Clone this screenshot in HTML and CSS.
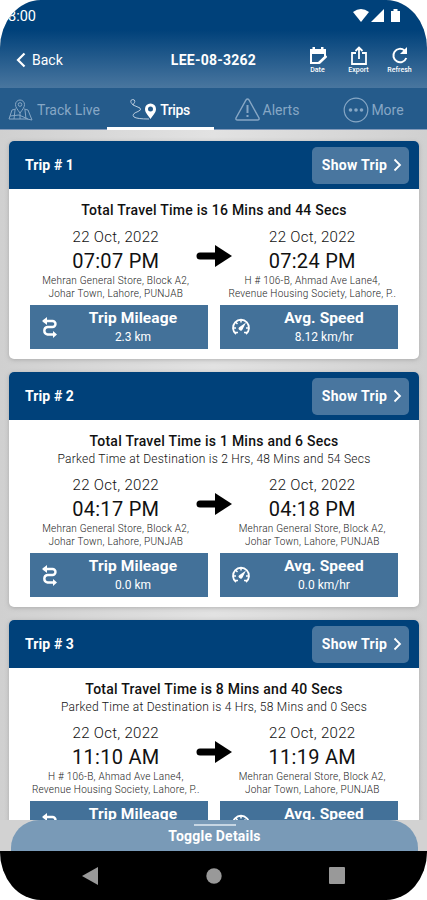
FILE: index.html
```html
<!DOCTYPE html>
<html lang="en">
<head>
<meta charset="utf-8">
<title>Trips</title>
<link rel="stylesheet" href="styles.css">
</head>
<body>
<svg class="defs" aria-hidden="true">
  <symbol id="arrow" viewBox="0 0 36 24"><path d="M4 12H22" stroke="#000" stroke-width="7" stroke-linecap="round"/><path d="M19 1V23L36 12Z"/></symbol>
  <symbol id="route" viewBox="0 0 18 22"><path d="M2.500 5H11.500a3 3 0 0 1 0 6H6.500a3.800 3.800 0 0 0 0 7.500H13" fill="none" stroke="#fff" stroke-width="2.400"/><path d="M6 1V9L1 5ZM12 15V22L16 18.500Z" fill="#fff"/></symbol>
  <symbol id="gauge" viewBox="0 0 20 18"><path d="M5 16A8 8 0 1 1 15 16" fill="none" stroke="#fff" stroke-width="1.800"/><path d="M2 10H5M4.500 4L6.500 6M10 1.500V4.500M18 10H15M4 14.500H7M13 14.500H16" stroke="#fff" stroke-width="1.500"/><path d="M8.500 9L15 4.500L11.500 11.500A2 2 0 1 1 8.500 9Z" fill="#fff"/></symbol>
  <symbol id="chev" viewBox="0 0 9 14"><path d="M1.500 1.500L7 7L1.500 12.500" fill="none" stroke="#fff" stroke-width="1.800"/></symbol>
</svg>
<div class="phone">
  <header class="top">
    <div class="status"><span>8:00</span>
      <svg width="48" height="16" viewBox="0 0 48 16" fill="#fff"><path d="M0 4Q8 -2 16 4L8 14Z"/><path d="M31 1V14H18Z"/><path d="M38 3h2.500V1h4V3H47V14H38Z"/></svg>
    </div>
    <div class="bar">
      <div class="back"><svg width="10" height="16" viewBox="0 0 10 16"><path d="M8.500 1.500L2 8L8.500 14.500" fill="none" stroke="#fff" stroke-width="2.200"/></svg><span>Back</span></div>
      <h1>LEE-08-3262</h1>
      <div class="actions">
        <div class="action"><svg width="18" height="20" viewBox="0 0 18 20"><path d="M2 5H16V11L10 17H2Z" fill="none" stroke="#fff" stroke-width="2"/><path d="M1 3H17V8H1ZM3.500 1H6V4H3.500ZM12 1H14.500V4H12Z" fill="#fff"/><path d="M10 17L17.500 10" stroke="#fff" stroke-width="2.500"/></svg><span>Date</span></div>
        <div class="action"><svg width="18" height="20" viewBox="0 0 18 20"><path d="M6 7H2V18H16V7H12M9 13V2M5.500 5L9 1.500L12.500 5" fill="none" stroke="#fff" stroke-width="1.800"/></svg><span>Export</span></div>
        <div class="action"><svg width="18" height="20" viewBox="0 0 18 20"><path d="M15.300 12A6.700 6.700 0 1 1 13.500 4.500" fill="none" stroke="#fff" stroke-width="2"/><path d="M16 1V8H9Z" fill="#fff"/></svg><span>Refresh</span></div>
      </div>
    </div>
  </header>
  <nav class="tabs">
    <div class="tab live"><svg width="26" height="22" viewBox="0 0 26 22" fill="none" stroke="currentColor"><path d="M12 14C9 10 7.500 8 7.500 5.500a4.500 4.500 0 0 1 9 0C16.500 8 15 10 12 14Z"/><circle cx="12" cy="5.500" r="1.800"/><path d="M8 10L4 11L1 20H19L24 21L20 11L16 10M7 11L6 20M12 14V20M17 11L18 20M2 17L11 16L20 20"/></svg><span>Track Live</span></div>
    <div class="tab on"><svg width="27" height="21" viewBox="0 0 27 21"><path d="M3 6C1.500 4 .8 3.500 .8 2.500a2 2 0 0 1 4 0C4.800 3.500 4 4 3 6L10 9Q12 11 8 12.500Q1 15 4 18Q7 20 19 20" fill="none" stroke="#b9cbdd"/><path fill-rule="evenodd" d="M20.500 20C17 15 15 13 15 10a5.500 5.500 0 0 1 11 0C26 13 24 15 20.500 20ZM20.500 7.500a2.500 2.500 0 1 0 0 5a2.500 2.500 0 0 0 0-5Z" fill="#fff"/></svg><span>Trips</span></div>
    <div class="tab alerts"><svg width="25" height="23" viewBox="0 0 25 23" fill="none" stroke="currentColor" stroke-width="1.400"><path d="M11 2Q12.500 0 14 2L24 20Q24.500 22 22.500 22H2.500Q.5 22 1 20Z"/><path d="M12.500 7V15M12.500 17V19" stroke-width="2"/></svg><span>Alerts</span></div>
    <div class="tab more"><svg width="26" height="26" viewBox="0 0 26 26"><circle cx="13" cy="13" r="11.800" fill="none" stroke="currentColor" stroke-width="1.200"/><g fill="currentColor"><circle cx="7.500" cy="13" r="1.800"/><circle cx="13" cy="13" r="1.800"/><circle cx="18.500" cy="13" r="1.800"/></g></svg><span>More</span></div>
  </nav>
  <main class="list">
    <section class="card">
      <div class="head"><h2>Trip # 1</h2><div class="show"><span>Show Trip</span><svg width="9" height="14"><use href="#chev"/></svg></div></div>
      <div class="body">
        <p class="total">Total Travel Time is 16 Mins and 44 Secs</p>
        <div class="legs">
          <div class="leg"><p class="date">22 Oct, 2022</p><p class="time">07:07 PM</p><p class="addr">Mehran General Store, Block A2,<br>Johar Town, Lahore, PUNJAB</p></div>
          <svg class="arrow" width="36" height="24"><use href="#arrow"/></svg>
          <div class="leg"><p class="date">22 Oct, 2022</p><p class="time">07:24 PM</p><p class="addr">H # 106-B, Ahmad Ave Lane4,<br>Revenue Housing Society, Lahore, P..</p></div>
        </div>
        <div class="stats">
          <div class="stat"><svg width="18" height="22"><use href="#route"/></svg><div><b>Trip Mileage</b><span>2.3 km</span></div></div>
          <div class="stat"><svg width="20" height="18"><use href="#gauge"/></svg><div><b>Avg. Speed</b><span>8.12 km/hr</span></div></div>
        </div>
      </div>
    </section>
    <section class="card">
      <div class="head"><h2>Trip # 2</h2><div class="show"><span>Show Trip</span><svg width="9" height="14"><use href="#chev"/></svg></div></div>
      <div class="body">
        <p class="total">Total Travel Time is 1 Mins and 6 Secs</p>
        <p class="parked">Parked Time at Destination is 2 Hrs, 48 Mins and 54 Secs</p>
        <div class="legs">
          <div class="leg"><p class="date">22 Oct, 2022</p><p class="time">04:17 PM</p><p class="addr">Mehran General Store, Block A2,<br>Johar Town, Lahore, PUNJAB</p></div>
          <svg class="arrow" width="36" height="24"><use href="#arrow"/></svg>
          <div class="leg"><p class="date">22 Oct, 2022</p><p class="time">04:18 PM</p><p class="addr">Mehran General Store, Block A2,<br>Johar Town, Lahore, PUNJAB</p></div>
        </div>
        <div class="stats">
          <div class="stat"><svg width="18" height="22"><use href="#route"/></svg><div><b>Trip Mileage</b><span>0.0 km</span></div></div>
          <div class="stat"><svg width="20" height="18"><use href="#gauge"/></svg><div><b>Avg. Speed</b><span>0.0 km/hr</span></div></div>
        </div>
      </div>
    </section>
    <section class="card">
      <div class="head"><h2>Trip # 3</h2><div class="show"><span>Show Trip</span><svg width="9" height="14"><use href="#chev"/></svg></div></div>
      <div class="body">
        <p class="total">Total Travel Time is 8 Mins and 40 Secs</p>
        <p class="parked">Parked Time at Destination is 4 Hrs, 58 Mins and 0 Secs</p>
        <div class="legs">
          <div class="leg"><p class="date">22 Oct, 2022</p><p class="time">11:10 AM</p><p class="addr">H # 106-B, Ahmad Ave Lane4,<br>Revenue Housing Society, Lahore, P..</p></div>
          <svg class="arrow" width="36" height="24"><use href="#arrow"/></svg>
          <div class="leg"><p class="date">22 Oct, 2022</p><p class="time">11:19 AM</p><p class="addr">Mehran General Store, Block A2,<br>Johar Town, Lahore, PUNJAB</p></div>
        </div>
        <div class="stats">
          <div class="stat"><svg width="18" height="22"><use href="#route"/></svg><div><b>Trip Mileage</b></div></div>
          <div class="stat"><svg width="20" height="18"><use href="#gauge"/></svg><div><b>Avg. Speed</b></div></div>
        </div>
      </div>
    </section>
  </main>
  <div class="drawer"><div class="sheet"><i></i><span>Toggle Details</span></div></div>
  <footer class="navbar"><svg width="16" height="18"><path d="M16 0V18L0 9Z" fill="#999"/></svg><svg width="16" height="16"><circle cx="8" cy="8" r="7.700" fill="#999"/></svg><svg width="16" height="17"><rect width="16" height="17" rx="1" fill="#999"/></svg></footer>
</div>
</body>
</html>
```
FILE: styles.css
```css
* { box-sizing: border-box; margin: 0; padding: 0; }
body { background: #fff; font-family: Roboto, sans-serif; color: #111; }
.defs { position: absolute; width: 0; height: 0; }
svg { display: block; flex: none; }
.phone { width: 427px; height: 900px; border-radius: 41px / 48px; overflow: hidden; display: flex; flex-direction: column; background: #d2d2d2; }
.top { height: 88px; flex: none; background: linear-gradient(#00417a 0, #00417a 30px, #49769f 88px); color: #fff; }
.status { height: 32px; display: flex; justify-content: space-between; padding: 8px 26px 0 8px; font-size: 14.5px; line-height: 17px; }
.status svg { margin-left: auto; }
.bar { height: 56px; display: grid; grid-template-columns: 1fr auto 1fr; align-items: center; padding: 0 7px 0 16px; }
.back { display: flex; align-items: center; gap: 6px; font-size: 14px; }
h1 { font-size: 14px; font-weight: 700; letter-spacing: .25px; padding-right: 9px; }
.actions { display: flex; justify-content: flex-end; }
.action { width: 41px; display: flex; flex-direction: column; align-items: center; font-size: 7px; font-weight: 500; line-height: 8px; }
.tabs { height: 42px; flex: none; display: grid; grid-template-columns: 107px 107px 106px 107px; background: #255b8b; border-bottom: 1px solid #8299b9; color: #87a7c5; }
.tab { display: flex; align-items: center; justify-content: center; font-size: 14px; gap: 3px; height: 42px; padding-top: 1px; }
.live { padding-left: 1px; }
.more { gap: 2px; }
.on { color: #fff; border-bottom: 3px solid #fff; padding: 4px 1px 0 0; letter-spacing: -.4px; font-weight: 500; }
.list { height: 690px; flex: none; overflow: hidden; padding: 11px 8px 0 9px; background: linear-gradient(90deg, #d0d0d0, #e2e2e2 50%, #d0d0d0); }
.card { background: #fff; border-radius: 5px; margin-bottom: 13px; overflow: hidden; box-shadow: 0 1px 4px #8888; }
.head { height: 48px; background: #00417a; color: #fff; display: flex; align-items: center; justify-content: space-between; padding: 0 10px 0 16px; }
h2 { font-size: 14px; font-weight: 700; letter-spacing: .1px; }
.show { width: 97px; height: 37px; border-radius: 5px; background: #49769f; display: flex; align-items: center; justify-content: center; gap: 6px; font-size: 14px; font-weight: 700; letter-spacing: .3px; padding-left: 3px; }
.body { padding: 12px 21px 10px; text-align: center; }
.total { font-size: 14px; line-height: 18px; font-weight: 500; letter-spacing: .25px; white-space: nowrap; }
.parked { font-size: 12px; line-height: 17px; letter-spacing: .25px; color: #111; font-weight: 300; white-space: nowrap; padding-top: 1px; margin-bottom: -1px; }
.legs { display: grid; grid-template-columns: 160.500px 36px 160.500px; justify-content: center; margin-top: 8px; height: 78px; }
.date { font-size: 15px; line-height: 20px; letter-spacing: .3px; color: #111; font-weight: 300; }
.time { font-size: 20px; line-height: 29px; font-weight: 400; letter-spacing: .3px; }
.addr { font-size: 10px; line-height: 12.500px; color: #222; font-weight: 300; letter-spacing: .25px; white-space: nowrap; margin-top: -1px; }
.leg { display: flex; flex-direction: column; align-items: center; }
.arrow { margin-top: 17px; }
.stats { display: grid; grid-template-columns: 1fr 1fr; gap: 12px; }
.stat { height: 44px; background: #437199; color: #fff; display: flex; align-items: center; padding-left: 11px; }
.stat > div { flex: 1; display: flex; flex-direction: column; padding-right: 1px; align-self: flex-start; padding-top: 4px; }
.stat b { font-size: 15.500px; line-height: 19px; font-weight: 700; letter-spacing: .1px; }
.stat span { font-size: 12px; line-height: 18px; }
.drawer { height: 31px; flex: none; padding: 0 9px 0 11px; background: #d2d2d2; }
.sheet { height: 31px; background: #799ab7; border-radius: 28px 28px 0 0; color: #fff; display: flex; flex-direction: column; align-items: center; font-size: 14px; font-weight: 700; line-height: 20px; letter-spacing: .2px; padding-top: 4px; }
.sheet i { width: 42px; height: 2px; background: #c7d6e3; }
.navbar { height: 49px; flex: none; background: #000; display: flex; align-items: center; justify-content: space-between; padding: 0 82px; }
```
